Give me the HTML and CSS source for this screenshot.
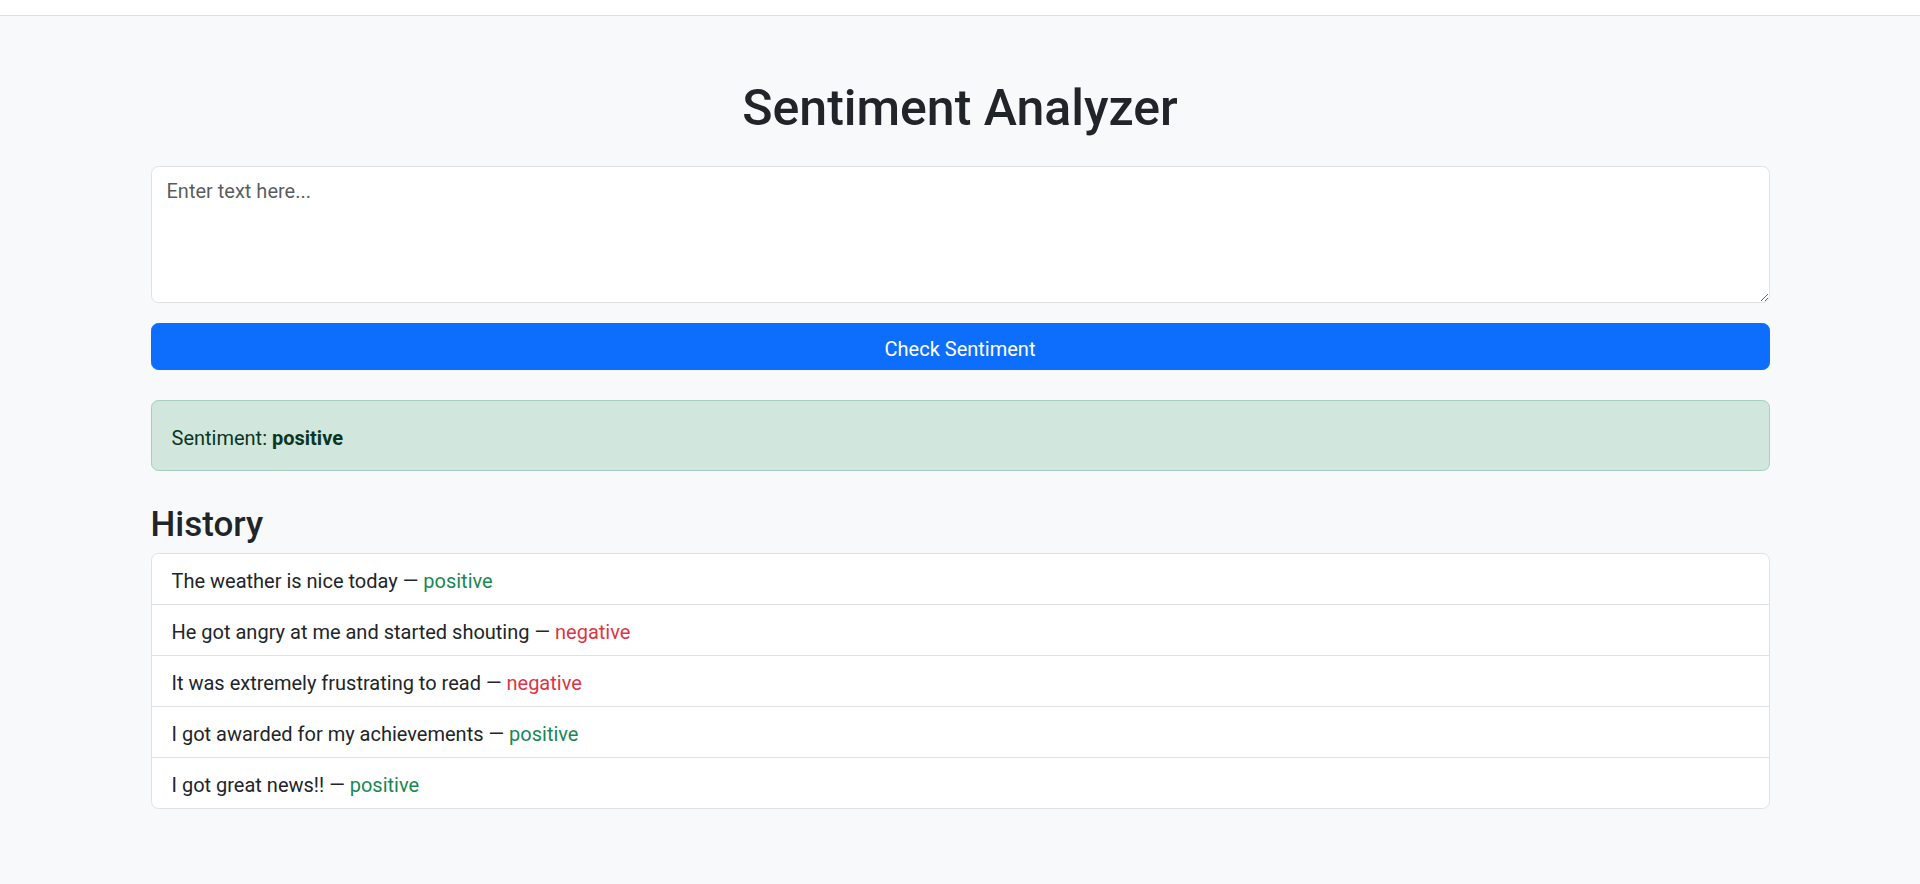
FILE: index.html
```html
<!DOCTYPE html>
<html lang="en">
<head>
<meta charset="utf-8">
<title>Sentiment Analyzer</title>
<link rel="stylesheet" href="styles.css">
</head>
<body>
<div class="topbar"></div>
<main class="container">
  <h1 class="title">Sentiment Analyzer</h1>
  <textarea class="text-input" placeholder="Enter text here..."></textarea>
  <button class="btn-primary" type="button">Check Sentiment</button>
  <div class="alert-success">Sentiment: <strong>positive</strong></div>
  <h3 class="section-title">History</h3>
  <ul class="list-group">
    <li class="list-item">The weather is nice today — <span class="pos">positive</span></li>
    <li class="list-item">He got angry at me and started shouting — <span class="neg">negative</span></li>
    <li class="list-item">It was extremely frustrating to read — <span class="neg">negative</span></li>
    <li class="list-item">I got awarded for my achievements — <span class="pos">positive</span></li>
    <li class="list-item">I got great news!! — <span class="pos">positive</span></li>
  </ul>
</main>
</body>
</html>
```
FILE: styles.css
```css
* { box-sizing: border-box; }
html, body { margin: 0; padding: 0; }
body {
  background: #f8f9fa;
  color: #212529;
  font-family: Roboto, "Liberation Sans", sans-serif;
  font-size: 20px;
  line-height: 30px;
}
.topbar {
  height: 16px;
  background: #ffffff;
  border-bottom: 1px solid #dcdee0;
}
.container {
  max-width: 1619px;
  margin: 0 auto;
  display: flex;
  flex-direction: column;
}
.title {
  margin: 62px 0 28px;
  font-size: 50px;
  line-height: 60px;
  font-weight: 500;
  text-align: center;
}
.text-input {
  display: block;
  width: 100%;
  height: 137px;
  padding: 9px 15px 6px;
  font: inherit;
  color: #212529;
  background: #fff;
  border: 1px solid #dee2e6;
  border-radius: 7.5px;
  resize: vertical;
  outline: none;
}
.text-input::placeholder { color: rgba(33, 37, 41, 0.75); }
.btn-primary {
  display: block;
  width: 100%;
  height: 47px;
  margin-top: 20px;
  padding: 9.5px 15px 5.5px;
  font: inherit;
  color: #fff;
  background: #0d6efd;
  border: 1px solid #0d6efd;
  border-radius: 7.5px;
  cursor: pointer;
}
.alert-success {
  margin-top: 30px;
  padding: 21.5px 20px 17.5px;
  background: #d1e7dd;
  color: #0a3622;
  border: 1px solid #a3cfbb;
  border-radius: 7.5px;
}
.alert-success strong { font-weight: 700; }
.section-title {
  margin: 30px 0 7px;
  padding-top: 3px;
  font-size: 35px;
  line-height: 42px;
  font-weight: 500;
}
.list-group {
  list-style: none;
  margin: 0;
  padding: 0;
  background: #fff;
  border: 1px solid #dee2e6;
  border-radius: 7.5px;
}
.list-item {
  padding: 12px 20px 8px;
  border-bottom: 1px solid #dee2e6;
}
.list-item:last-child { border-bottom: none; }
.pos { color: #198754; }
.neg { color: #dc3545; }
```
